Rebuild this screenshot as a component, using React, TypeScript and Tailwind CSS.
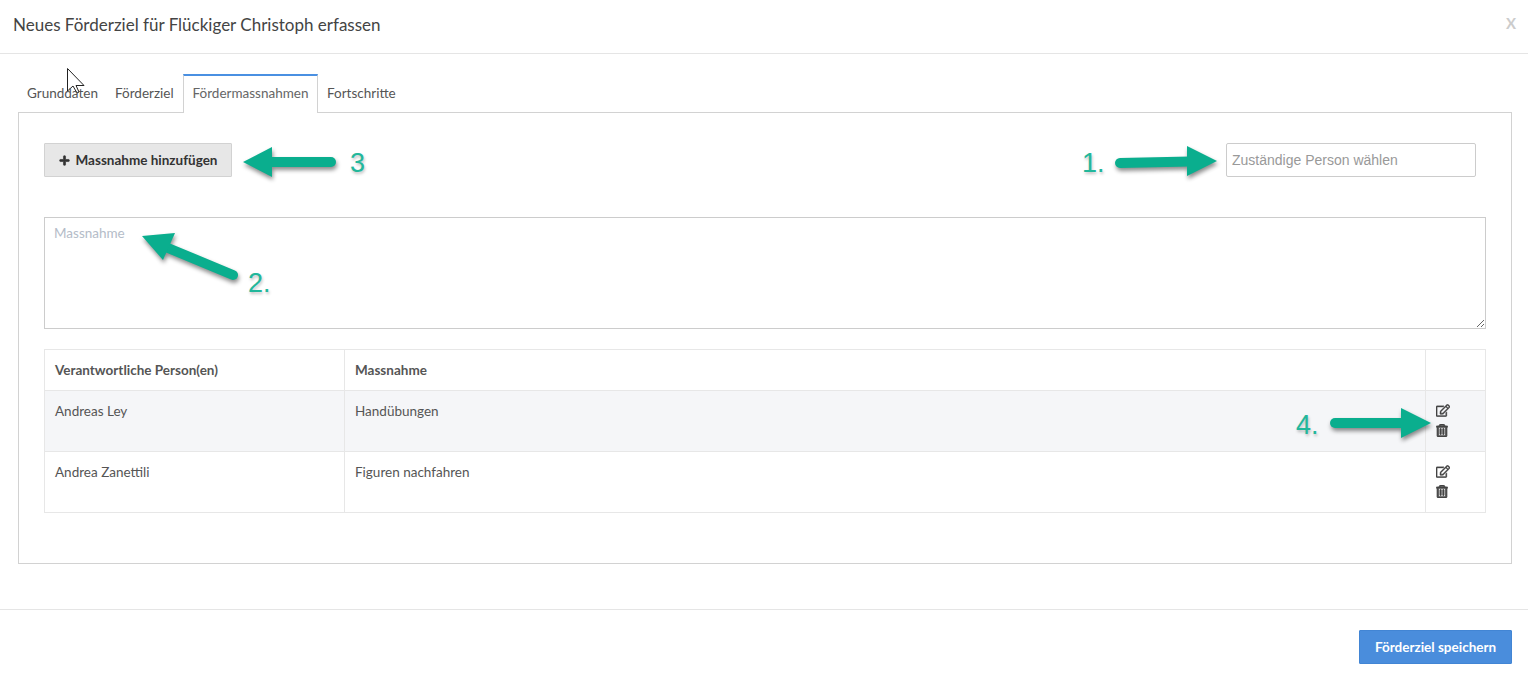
import { FaPlus, FaRegEdit, FaRegTrashAlt } from 'react-icons/fa';

const ARROW = '#0aae8e';

const rows = [
  { person: 'Andreas Ley', action: 'Handübungen', striped: true },
  { person: 'Andrea Zanettili', action: 'Figuren nachfahren', striped: false },
];

function Annotations() {
  return (
    <>
      <svg
        width="1528"
        height="679"
        viewBox="0 0 1528 679"
        className="absolute left-0 top-0 pointer-events-none drop-shadow-[1px_3px_2px_rgba(0,0,0,0.45)]"
      >
        <g fill={ARROW} stroke={ARROW} strokeLinecap="round">
          {/* 1 */}
          <path d="M1120 163L1190 161.5" strokeWidth="10" />
          <path d="M1187 146L1217 161L1187 176Z" strokeWidth="0" />
          {/* 3 */}
          <path d="M331 162L268 162" strokeWidth="10" />
          <path d="M272 147L243 162L272 177Z" strokeWidth="0" />
          {/* 2 */}
          <path d="M233 275L168 248" strokeWidth="10" />
          <path d="M142 236L175 233L163 260Z" strokeWidth="0" />
          {/* 4 */}
          <path d="M1335 423L1405 423" strokeWidth="10" />
          <path d="M1401 408L1431 423L1401 438Z" strokeWidth="0" />
        </g>
      </svg>
      <span className="absolute left-[1082px] top-[148px] text-[27px] leading-[30px] text-[#22b79b] [font-family:'Liberation_Sans',sans-serif] [text-shadow:1px_2px_3px_rgba(0,0,0,0.25)]">1.</span>
      <span className="absolute left-[350px] top-[148px] text-[27px] leading-[30px] text-[#22b79b] [font-family:'Liberation_Sans',sans-serif] [text-shadow:1px_2px_3px_rgba(0,0,0,0.25)]">3</span>
      <span className="absolute left-[248px] top-[268px] text-[27px] leading-[30px] text-[#22b79b] [font-family:'Liberation_Sans',sans-serif] [text-shadow:1px_2px_3px_rgba(0,0,0,0.25)]">2.</span>
      <span className="absolute left-[1296px] top-[410px] text-[27px] leading-[30px] text-[#22b79b] [font-family:'Liberation_Sans',sans-serif] [text-shadow:1px_2px_3px_rgba(0,0,0,0.25)]">4.</span>
      {/* mouse pointer left in the capture */}
      <svg width="20" height="26" viewBox="0 0 20 26" className="absolute left-[67px] top-[68px]">
        <path d="M0.5 0.5L0.5 23L6 18L10 25L12 24L9 17.5L17 17.5Z" fill="#fff" stroke="#222" strokeWidth="1" />
      </svg>
    </>
  );
}

export default function App() {
  return (
    <div className="relative w-[1528px] h-[679px] overflow-hidden bg-white text-[#555] text-[13.5px] leading-[20px] [font-family:Lato,sans-serif]">
      {/* Header */}
      <div className="h-[54px] border-b border-[#e5e5e5] flex items-center justify-between pl-[13px] pr-[12px]">
        <h4 className="text-[17px] text-[#444] -mt-[4px]">Neues Förderziel für Flückiger Christoph erfassen</h4>
        <span className="text-[15px] font-bold text-[#ccc] -mt-[8px]">X</span>
      </div>

      {/* Body */}
      <div className="pl-[18px] pr-[16px] pt-[20px] h-[555px]">
        <div className="flex h-[39px] relative z-10">
          <div className="pl-[9px] pr-[9px] pt-[9px] w-[88px] whitespace-nowrap">Grunddaten</div>
          <div className="pl-[9px] pr-[9px] pt-[9px] w-[77px] whitespace-nowrap">Förderziel</div>
          <div className="w-[135px] h-[39px] bg-white border-t-2 border-t-[#4a90e2] border-x border-x-[#d2d2d2] pt-[7px] text-center text-[#666] whitespace-nowrap">Fördermassnahmen</div>
          <div className="pl-[9px] pt-[9px] whitespace-nowrap">Fortschritte</div>
        </div>

        <div className="-mt-px h-[452px] border border-[#d2d2d2] pl-[25px] pr-[25px] pt-[30px]">
          <div className="flex justify-between pr-[10px]">
            <button className="w-[188px] h-[34px] flex items-center justify-center gap-[6px] bg-[#e7e7e7] border border-[#d2d2d2] rounded-[1px] font-bold text-[#333] whitespace-nowrap">
              <FaPlus className="w-[11px] h-[11px]" stroke="currentColor" strokeWidth={30} />
              Massnahme hinzufügen
            </button>
            <input
              placeholder="Zuständige Person wählen"
              className="w-[250px] h-[34px] px-[5px] border border-[#ccc] rounded-[2px] text-[14px] outline-none placeholder:text-[#999] [font-family:'Liberation_Sans',sans-serif]"
            />
          </div>

          <textarea
            placeholder="Massnahme"
            className="block mt-[40px] w-[1442px] h-[112px] px-[9px] py-[5px] border border-[#ccc] text-[13.5px] leading-[20px] outline-none placeholder:text-[#b4bcc8]"
          />

          <table className="mt-[20px] w-[1442px] border-collapse table-fixed">
            <colgroup>
              <col className="w-[300px]" />
              <col />
              <col className="w-[60px]" />
            </colgroup>
            <thead>
              <tr className="h-[41px] font-bold">
                <th className="border border-[#e7e7e7] px-[10px] text-left">Verantwortliche Person(en)</th>
                <th className="border border-[#e7e7e7] px-[10px] text-left">Massnahme</th>
                <th className="border border-[#e7e7e7]" />
              </tr>
            </thead>
            <tbody>
              {rows.map((r) => (
                <tr key={r.person} className={r.striped ? 'h-[61px] bg-[#f5f6f8]' : 'h-[61px]'}>
                  <td className="border border-[#e7e7e7] px-[10px] pt-[10px] align-top">{r.person}</td>
                  <td className="border border-[#e7e7e7] px-[10px] pt-[10px] align-top">{r.action}</td>
                  <td className="border border-[#e7e7e7] pl-[10px] pt-[13px] align-top text-[#444]">
                    <div className="flex flex-col gap-[7px]">
                      <FaRegEdit className="w-[14px] h-[13px]" stroke="currentColor" strokeWidth={15} />
                      <FaRegTrashAlt className="w-[12px] h-[13px]" stroke="currentColor" strokeWidth={35} />
                    </div>
                  </td>
                </tr>
              ))}
            </tbody>
          </table>
        </div>
      </div>

      {/* Footer */}
      <div className="h-[70px] border-t border-[#e5e5e5] flex justify-end pt-[20px] pr-[16px]">
        <button className="w-[153px] h-[34px] bg-[#4a8ddc] border border-[#4285d4] rounded-[1px] text-white font-bold whitespace-nowrap">Förderziel speichern</button>
      </div>

      <Annotations />
    </div>
  );
}
